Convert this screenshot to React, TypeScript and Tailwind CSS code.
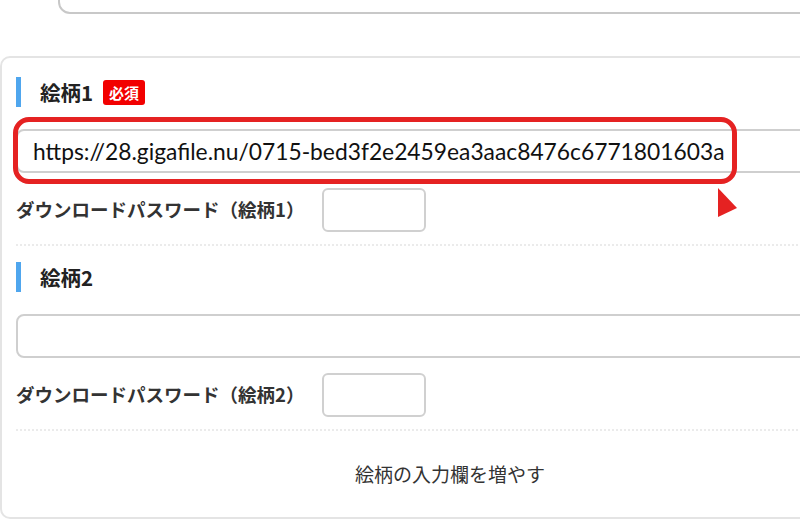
import React from "react";

const jp = { fontFamily: '"Noto Sans CJK JP", "Noto Sans", sans-serif' };
const url = { fontFamily: 'Lato, "Liberation Sans", sans-serif' };

function Heading({ label, required }: { label: string; required?: boolean }) {
  return (
    <div className="flex h-[30px] items-center border-l-[5px] border-[#4fa6ee] pl-[19px]" style={jp}>
      <span className="text-[20.5px] font-bold leading-none text-[#222]">{label}</span>
      {required && (
        <span className="ml-[10px] flex h-[25px] items-center rounded-[3px] bg-[#f20000] px-[6px] text-[15px] font-bold leading-none text-white">
          必須
        </span>
      )}
    </div>
  );
}

function Section({ n, value, required }: { n: number; value?: string; required?: boolean }) {
  return (
    <div>
      <Heading label={`絵柄${n}`} required={required} />
      <div className="mt-[22px] flex h-[44px] items-center rounded-[8px] border-2 border-[#cfcfcf] bg-white pl-[15px] -mr-[40px]">
        {value && (
          <span className="whitespace-nowrap text-[22.8px] leading-none text-[#111]" style={url}>
            {value}
          </span>
        )}
      </div>
      <div className="mt-[15px] flex items-center">
        <span className="w-[306px] text-[18.5px] font-bold text-[#333]" style={jp}>
          ダウンロードパスワード（絵柄{n}）
        </span>
        <div className="h-[44px] w-[104px] rounded-[6px] border-2 border-[#d0d0d0]" />
      </div>
      <div className="mt-[12px] border-b-2 border-dotted border-[#ebebeb]" />
    </div>
  );
}

export default function App() {
  return (
    <div className="relative h-[525px] w-[800px] overflow-hidden bg-white">
      {/* previous field, scrolled mostly out of view */}
      <div className="flex h-[14px] items-end overflow-hidden pl-[58px]">
        <div className="h-[40px] w-[800px] shrink-0 rounded-[12px] border-2 border-[#c8c8c8]" />
      </div>

      <div className="mt-[42px] -mr-[40px] rounded-[10px] border-2 border-[#e4e4e4] pl-[14px] pr-[40px] pt-[19px]">
        <Section n={1} required value="https://28.gigafile.nu/0715-bed3f2e2459ea3aac8476c6771801603a" />
        <div className="mt-[16px]">
          <Section n={2} />
        </div>
        <div className="flex h-[86px] items-center justify-center pl-[86px]">
          <span className="text-[19px] text-[#333]" style={jp}>
            絵柄の入力欄を増やす
          </span>
        </div>
      </div>

      {/* highlight annotation */}
      <div className="pointer-events-none absolute left-[13px] top-[117px] h-[67px] w-[724px] rounded-[16px] border-[5px] border-[#e52222]" />
      <svg className="absolute left-[717px] top-[188px]" width="22" height="30" viewBox="0 0 22 30">
        <polygon points="1,0 1,29 20,20" fill="#e52222" />
      </svg>
    </div>
  );
}
